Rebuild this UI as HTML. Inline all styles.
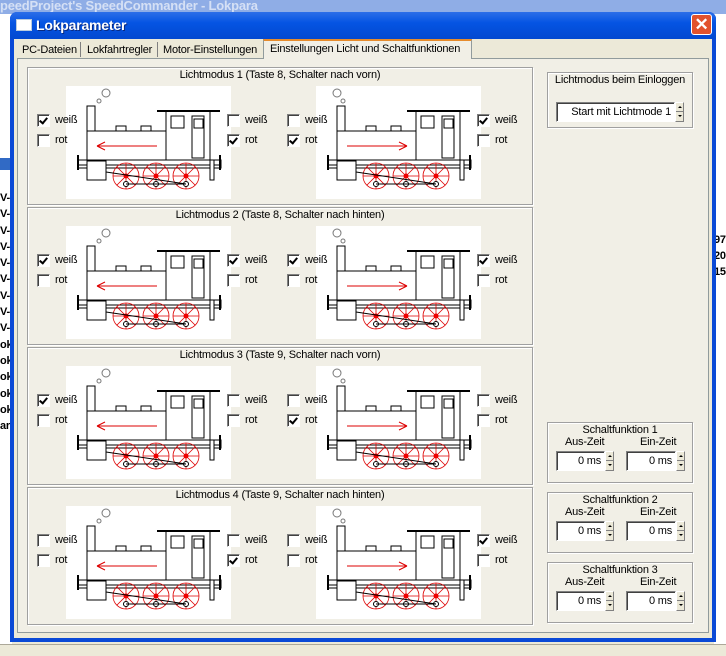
<!DOCTYPE html>
<html><head><meta charset="utf-8"><style>
*{margin:0;padding:0;box-sizing:border-box}
body{width:726px;height:656px;overflow:hidden;position:relative;background:#ece9d8;font-family:"Liberation Sans",Arial,sans-serif;font-size:11px;color:#000;letter-spacing:-0.2px}
.a{position:absolute}
.cb{position:absolute;width:13px;height:13px;background:#fff;border:1px solid #1c5180;border-color:#808080 #fff #fff #808080;box-shadow:inset 1px 1px 0 #404040}
.cb.c::after{content:"";position:absolute;left:3px;top:1px;width:3px;height:6px;border:solid #000;border-width:0 2px 2px 0;transform:rotate(40deg)}
.lb{position:absolute;font-size:11px}
.grp{position:absolute;border:1px solid #a0a0a0;box-shadow:inset 1px 1px 0 #fff,1px 1px 0 #fff}
.gt{position:absolute;left:0;right:0;text-align:center;font-size:11px}
.img{position:absolute;width:165px;height:113px;background:#fff}
.ed{position:absolute;height:20px;background:#fff;border:1px solid #808080;border-color:#808080 #fff #fff #808080;box-shadow:inset 1px 1px 0 #404040;text-align:right;padding:3px 3px 0 0;font-size:11px}
.sp{position:absolute;width:9px;height:20px;background:#ece9d8;border:1px solid #fff;border-color:#fff #808080 #808080 #fff}
.sp::before{content:"";position:absolute;left:2px;top:3px;border:2px solid transparent;border-bottom:2px solid #000;border-top:0}
.sp::after{content:"";position:absolute;left:2px;top:12px;border:2px solid transparent;border-top:2px solid #000;border-bottom:0}
.sp i{position:absolute;left:0;right:0;top:8px;border-top:1px solid #808080}
</style></head><body>
<svg width="0" height="0" style="position:absolute"><defs>
<g id="loco">
<rect x="21" y="20" width="8" height="25" fill="none" stroke="#000"/>
<rect x="21" y="45" width="79" height="29" fill="#fff" stroke="#000"/>
<rect x="50" y="40" width="10" height="5" fill="none" stroke="#000"/>
<rect x="75" y="40" width="10" height="5" fill="none" stroke="#000"/>
<line x1="91" y1="25" x2="154" y2="25" stroke="#000" stroke-width="2"/>
<rect x="100" y="25" width="44" height="49" fill="none" stroke="#000"/>
<rect x="105" y="30" width="13" height="12" fill="none" stroke="#000"/>
<rect x="126" y="30" width="12" height="42" fill="none" stroke="#000"/>
<rect x="128" y="33" width="9" height="9" fill="none" stroke="#000"/>
<line x1="12" y1="79" x2="154" y2="79" stroke="#000" stroke-width="1"/>
<rect x="12" y="74" width="143" height="8" fill="none" stroke="#000"/>
<line x1="12" y1="69" x2="12" y2="84" stroke="#000" stroke-width="2"/>
<line x1="154" y1="69" x2="154" y2="84" stroke="#000" stroke-width="2"/>
<rect x="21" y="75" width="19" height="19" fill="#fff" stroke="#000"/>
<rect x="144" y="74" width="4" height="20" fill="#fff" stroke="#000"/>
<g stroke="#d00" fill="none" stroke-width="0.8">
<circle cx="60" cy="90" r="13"/><circle cx="90" cy="90" r="13"/><circle cx="120" cy="90" r="13"/>
<path d="M47 90h26M60 77v26M51 81l18 18M69 81l-18 18M77 90h26M90 77v26M81 81l18 18M99 81l-18 18M107 90h26M120 77v26M111 81l18 18M129 81l-18 18"/>
</g>
<g fill="#e00"><circle cx="60" cy="90" r="2.5"/><circle cx="90" cy="90" r="2.5"/><circle cx="120" cy="90" r="2.5"/></g>
<g fill="#fff" stroke="#000"><circle cx="60" cy="98" r="2.5"/><circle cx="90" cy="98" r="2.5"/><circle cx="120" cy="98" r="2.5"/></g>
<path d="M40 86L120 98M60 98h60" stroke="#000" fill="none"/>
</g>
<g id="l1"><use href="#loco"/><circle cx="40" cy="7" r="4" fill="none" stroke="#777"/><circle cx="33" cy="15" r="2" fill="none" stroke="#777"/>
<path d="M31 60h60M31 60l8-4M31 60l8 4" stroke="#d00" fill="none"/></g>
<g id="l2"><use href="#loco"/><circle cx="21" cy="7" r="4" fill="none" stroke="#777"/><circle cx="27" cy="15" r="2" fill="none" stroke="#777"/>
<path d="M31 60h60M91 60l-8-4M91 60l-8 4" stroke="#d00" fill="none"/></g>
</defs></svg>

<div class="a" style="left:0;top:0;width:726px;height:14px;background:#8fade6;color:#d5e0f5;font-weight:bold;font-size:13px;line-height:12px">peedProject's SpeedCommander - Lokpara</div>
<div class="a" style="left:0;top:14px;width:12px;height:630px;background:#fff"></div>
<div class="a" style="left:0;top:158px;width:12px;height:12px;background:#316ac5"></div>
<div class="a" style="left:0;top:190px;width:12px;font-weight:bold;font-size:11px;line-height:16.3px">V-<br>V-<br>V-<br>V-<br>V-<br>V-<br>V-<br>V-<br>V-<br>ok<br>ok<br>ok<br>ok<br>ok<br>ar</div>
<div class="a" style="left:714px;top:14px;width:12px;height:630px;background:#fff"></div>
<div class="a" style="left:714px;top:232px;font-weight:bold;font-size:11px;line-height:16px">97<br>20<br>15</div>
<div class="a" style="left:0;top:644px;width:726px;height:12px;background:#ece9d8;border-top:1px solid #aca899"></div>

<div class="a" style="left:10px;top:12px;width:706px;height:630px;background:#0a49d6;border-radius:7px 7px 0 0"></div>
<div class="a" style="left:10px;top:12px;width:706px;height:27px;background:linear-gradient(#2c6ee8,#0554e3 40%,#0349d0);border-radius:7px 7px 0 0"></div>
<div class="a" style="left:16px;top:19px;width:16px;height:12px;background:#fff;border:1px solid #bcd"></div>
<div class="a" style="left:36px;top:17px;color:#fff;font-weight:bold;font-size:14px;text-shadow:1px 1px 0 #0a2a80">Lokparameter</div>
<div class="a" style="left:691px;top:14px;width:21px;height:21px;background:#e2522d;border:1px solid #fff;border-radius:3px;color:#fff;font-size:17px;font-weight:bold;text-align:center;line-height:19px">✕</div>
<div class="a" style="left:14px;top:39px;width:698px;height:599px;background:#ece9d8"></div>

<div class="a" style="left:17px;top:58px;width:692px;height:575px;border:1px solid #919b9c;background:#f1efe6"></div>
<div class="a" style="left:17px;top:42px;height:16px;width:250px;font-size:11px;line-height:16px;white-space:nowrap">
<span style="position:absolute;left:5px">PC-Dateien</span><span style="position:absolute;left:63px;top:0;height:15px;border-left:1px solid #808080"></span>
<span style="position:absolute;left:70px">Lokfahrtregler</span><span style="position:absolute;left:140px;height:15px;border-left:1px solid #808080"></span>
<span style="position:absolute;left:146px">Motor-Einstellungen</span>
</div>
<div class="a" style="left:263px;top:39px;width:209px;height:20px;background:#f1efe6;border:1px solid #919b9c;border-bottom:none;border-top:2px solid #e68b2c;padding:2px 0 0 6px;font-size:11px">Einstellungen Licht und Schaltfunktionen</div>

<div class="grp" style="left:27px;top:67px;width:506px;height:138px"><div class="gt" style="top:1px">Lichtmodus 1 (Taste 8, Schalter nach vorn)</div></div>
<div class="grp" style="left:27px;top:207px;width:506px;height:138px"><div class="gt" style="top:1px">Lichtmodus 2 (Taste 8, Schalter nach hinten)</div></div>
<div class="grp" style="left:27px;top:347px;width:506px;height:138px"><div class="gt" style="top:1px">Lichtmodus 3 (Taste 9, Schalter nach vorn)</div></div>
<div class="grp" style="left:27px;top:487px;width:506px;height:138px"><div class="gt" style="top:1px">Lichtmodus 4 (Taste 9, Schalter nach hinten)</div></div>

<svg class="img" style="left:66px;top:86px"><use href="#l1"/></svg>
<svg class="img" style="left:316px;top:86px"><use href="#l2"/></svg>
<svg class="img" style="left:66px;top:226px"><use href="#l1"/></svg>
<svg class="img" style="left:316px;top:226px"><use href="#l2"/></svg>
<svg class="img" style="left:66px;top:366px"><use href="#l1"/></svg>
<svg class="img" style="left:316px;top:366px"><use href="#l2"/></svg>
<svg class="img" style="left:66px;top:506px"><use href="#l1"/></svg>
<svg class="img" style="left:316px;top:506px"><use href="#l2"/></svg>

<div class="cb c" style="left:37px;top:114px"></div><div class="lb" style="left:55px;top:114px">weiß</div>
<div class="cb" style="left:37px;top:134px"></div><div class="lb" style="left:55px;top:134px">rot</div>
<div class="cb" style="left:227px;top:114px"></div><div class="lb" style="left:245px;top:114px">weiß</div>
<div class="cb c" style="left:227px;top:134px"></div><div class="lb" style="left:245px;top:134px">rot</div>
<div class="cb" style="left:287px;top:114px"></div><div class="lb" style="left:305px;top:114px">weiß</div>
<div class="cb c" style="left:287px;top:134px"></div><div class="lb" style="left:305px;top:134px">rot</div>
<div class="cb c" style="left:477px;top:114px"></div><div class="lb" style="left:495px;top:114px">weiß</div>
<div class="cb" style="left:477px;top:134px"></div><div class="lb" style="left:495px;top:134px">rot</div>

<div class="cb c" style="left:37px;top:254px"></div><div class="lb" style="left:55px;top:254px">weiß</div>
<div class="cb" style="left:37px;top:274px"></div><div class="lb" style="left:55px;top:274px">rot</div>
<div class="cb c" style="left:227px;top:254px"></div><div class="lb" style="left:245px;top:254px">weiß</div>
<div class="cb" style="left:227px;top:274px"></div><div class="lb" style="left:245px;top:274px">rot</div>
<div class="cb c" style="left:287px;top:254px"></div><div class="lb" style="left:305px;top:254px">weiß</div>
<div class="cb" style="left:287px;top:274px"></div><div class="lb" style="left:305px;top:274px">rot</div>
<div class="cb c" style="left:477px;top:254px"></div><div class="lb" style="left:495px;top:254px">weiß</div>
<div class="cb" style="left:477px;top:274px"></div><div class="lb" style="left:495px;top:274px">rot</div>

<div class="cb c" style="left:37px;top:394px"></div><div class="lb" style="left:55px;top:394px">weiß</div>
<div class="cb" style="left:37px;top:414px"></div><div class="lb" style="left:55px;top:414px">rot</div>
<div class="cb" style="left:227px;top:394px"></div><div class="lb" style="left:245px;top:394px">weiß</div>
<div class="cb" style="left:227px;top:414px"></div><div class="lb" style="left:245px;top:414px">rot</div>
<div class="cb" style="left:287px;top:394px"></div><div class="lb" style="left:305px;top:394px">weiß</div>
<div class="cb c" style="left:287px;top:414px"></div><div class="lb" style="left:305px;top:414px">rot</div>
<div class="cb" style="left:477px;top:394px"></div><div class="lb" style="left:495px;top:394px">weiß</div>
<div class="cb" style="left:477px;top:414px"></div><div class="lb" style="left:495px;top:414px">rot</div>

<div class="cb" style="left:37px;top:534px"></div><div class="lb" style="left:55px;top:534px">weiß</div>
<div class="cb" style="left:37px;top:554px"></div><div class="lb" style="left:55px;top:554px">rot</div>
<div class="cb" style="left:227px;top:534px"></div><div class="lb" style="left:245px;top:534px">weiß</div>
<div class="cb c" style="left:227px;top:554px"></div><div class="lb" style="left:245px;top:554px">rot</div>
<div class="cb" style="left:287px;top:534px"></div><div class="lb" style="left:305px;top:534px">weiß</div>
<div class="cb" style="left:287px;top:554px"></div><div class="lb" style="left:305px;top:554px">rot</div>
<div class="cb c" style="left:477px;top:534px"></div><div class="lb" style="left:495px;top:534px">weiß</div>
<div class="cb" style="left:477px;top:554px"></div><div class="lb" style="left:495px;top:554px">rot</div>

<div class="grp" style="left:547px;top:72px;width:146px;height:56px"><div class="gt" style="top:1px">Lichtmodus beim Einloggen</div></div>
<div class="ed" style="left:556px;top:102px;width:119px">Start mit Lichtmode 1</div><div class="sp" style="left:675px;top:102px"><i></i></div>

<div class="grp" style="left:547px;top:422px;width:146px;height:61px"><div class="gt" style="top:1px">Schaltfunktion 1</div><div class="a" style="left:17px;top:13px">Aus-Zeit</div><div class="a" style="left:92px;top:13px">Ein-Zeit</div></div>
<div class="ed" style="left:556px;top:451px;width:49px">0 ms</div><div class="sp" style="left:605px;top:451px"><i></i></div>
<div class="ed" style="left:626px;top:451px;width:50px">0 ms</div><div class="sp" style="left:676px;top:451px"><i></i></div>

<div class="grp" style="left:547px;top:492px;width:146px;height:61px"><div class="gt" style="top:1px">Schaltfunktion 2</div><div class="a" style="left:17px;top:13px">Aus-Zeit</div><div class="a" style="left:92px;top:13px">Ein-Zeit</div></div>
<div class="ed" style="left:556px;top:521px;width:49px">0 ms</div><div class="sp" style="left:605px;top:521px"><i></i></div>
<div class="ed" style="left:626px;top:521px;width:50px">0 ms</div><div class="sp" style="left:676px;top:521px"><i></i></div>

<div class="grp" style="left:547px;top:562px;width:146px;height:61px"><div class="gt" style="top:1px">Schaltfunktion 3</div><div class="a" style="left:17px;top:13px">Aus-Zeit</div><div class="a" style="left:92px;top:13px">Ein-Zeit</div></div>
<div class="ed" style="left:556px;top:591px;width:49px">0 ms</div><div class="sp" style="left:605px;top:591px"><i></i></div>
<div class="ed" style="left:626px;top:591px;width:50px">0 ms</div><div class="sp" style="left:676px;top:591px"><i></i></div>
</body></html>
